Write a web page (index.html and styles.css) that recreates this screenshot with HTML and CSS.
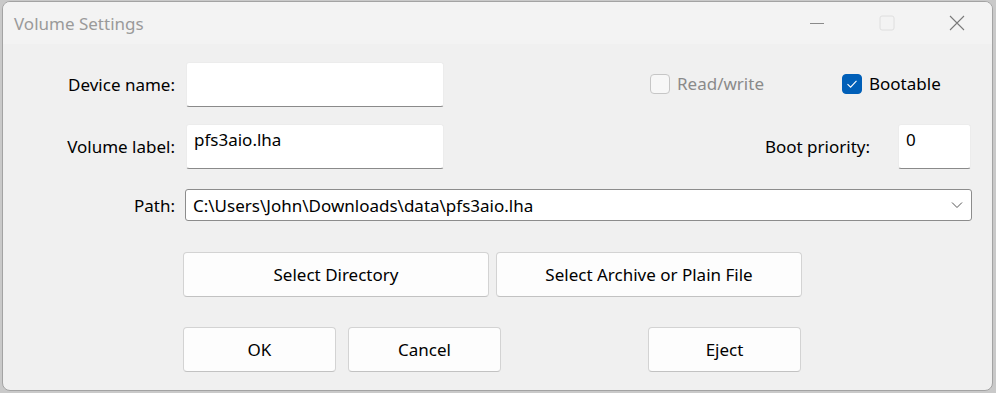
FILE: index.html
```html
<!DOCTYPE html>
<html lang="en">
<head>
    <meta charset="UTF-8">
    <title>Volume Settings</title>
    <link rel="stylesheet" href="styles.css">
</head>
<body>
    <div class="window">
        <div class="titlebar">
            <span class="title">Volume Settings</span>
            <div class="caption">
                <span class="cap-btn">
                    <svg width="16" height="16" viewBox="0 0 16 16"><path d="M1 8.5h14" stroke="#8a8a8a" stroke-width="1"/></svg>
                </span>
                <span class="cap-btn">
                    <svg width="16" height="16" viewBox="0 0 16 16"><rect x="1" y="1" width="14" height="14" rx="2" fill="none" stroke="#dedede" stroke-width="1"/></svg>
                </span>
                <span class="cap-btn">
                    <svg width="16" height="16" viewBox="0 0 16 16"><path d="M1 1L15 15M15 1L1 15" stroke="#7a7a7a" stroke-width="1.1"/></svg>
                </span>
            </div>
        </div>

        <div class="content">
            <div class="row">
                <span class="field-label">Device name:</span>
                <div class="edit edit-wide"></div>
                <label class="check check-rw disabled"><span class="box"></span>Read/write</label>
                <label class="check"><span class="box checked"><svg width="12" height="10" viewBox="0 0 12 10"><path d="M1.5 5.2L4.6 8.2L10.5 1.8" fill="none" stroke="#fff" stroke-width="1.1"/></svg></span>Bootable</label>
            </div>

            <div class="row row-volume">
                <span class="field-label">Volume label:</span>
                <div class="edit edit-wide">pfs3aio.lha</div>
                <span class="boot-label">Boot priority:</span>
                <div class="edit edit-small">0</div>
            </div>

            <div class="row row-path">
                <span class="field-label">Path:</span>
                <div class="combo">
                    <span>C:\Users\John\Downloads\data\pfs3aio.lha</span>
                    <svg width="12" height="8" viewBox="0 0 12 8"><path d="M1 1.5L6 6.5L11 1.5" fill="none" stroke="#555" stroke-width="1"/></svg>
                </div>
            </div>

            <div class="row row-select">
                <button class="btn btn-wide">Select Directory</button>
                <button class="btn btn-wide">Select Archive or Plain File</button>
            </div>

            <div class="row row-actions">
                <button class="btn">OK</button>
                <button class="btn btn-cancel">Cancel</button>
                <button class="btn btn-eject">Eject</button>
            </div>
        </div>
    </div>
</body>
</html>
```

FILE: styles.css
```css
body {
    margin: 0;
    background: #c9c9c9;
    font-family: 'Noto Sans', sans-serif;
    overflow: hidden;
}
.window {
    margin: 1px 0 0 2px;
    width: 989px;
    height: 388px;
    border: 1px solid #a3a3a3;
    border-radius: 8px;
    background: #f0f0f0;
    overflow: hidden;
}
.titlebar {
    height: 42px;
    background: #f3f3f3;
    display: flex;
    align-items: center;
}
.title {
    flex: 1;
    padding-left: 11px;
    font-size: 17px;
    color: #9a9a9a;
}
.caption {
    display: flex;
    height: 100%;
}
.cap-btn {
    width: 70px;
    display: flex;
    align-items: center;
    justify-content: center;
}
.content {
    padding-top: 18px;
}
.row {
    display: flex;
    align-items: center;
    font-size: 17px;
    color: #000;
}
.field-label {
    width: 172px;
    padding-right: 1px;
    text-align: right;
}
.edit {
    box-sizing: border-box;
    height: 45px;
    margin-left: 10px;
    padding: 5px 7px;
    background: #fff;
    border: 1px solid #ececec;
    border-bottom-color: #8a8a8a;
    border-radius: 3px;
    line-height: 20px;
    align-self: flex-start;
}
.edit-wide {
    width: 258px;
}
.check {
    display: flex;
    align-items: center;
    gap: 7px;
    align-self: flex-start;
    margin-top: 10px;
}
.check-rw {
    width: 192px;
    margin-left: 206px;
}
.disabled {
    color: #8a8a8a;
}
.box {
    box-sizing: border-box;
    width: 20px;
    height: 20px;
    border: 1px solid #c6c6c6;
    border-radius: 4px;
    background: #f7f7f7;
    display: flex;
    align-items: center;
    justify-content: center;
}
.box.checked {
    background: #005fb8;
    border-color: #005fb8;
}
.row-volume {
    margin-top: 17px;
}
.boot-label {
    width: 426px;
    text-align: right;
}
.edit-small {
    width: 73px;
    margin-left: 28px;
}
.row-path {
    margin-top: 20px;
}
.combo {
    box-sizing: border-box;
    width: 787px;
    height: 32px;
    margin-left: 9px;
    padding: 0 8px 0 7px;
    display: flex;
    align-items: center;
    justify-content: space-between;
    background: #fff;
    border: 1px solid #8c8c8c;
    border-radius: 3px;
}
.btn {
    box-sizing: border-box;
    width: 153px;
    height: 45px;
    background: #fdfdfd;
    border: 1px solid #d3d3d3;
    border-bottom-color: #c2c2c2;
    border-radius: 4px;
    font-family: 'Noto Sans', sans-serif;
    font-size: 17px;
    color: #000;
    padding: 0;
}
.btn-wide {
    width: 306px;
}
.row-select {
    margin-top: 31px;
    padding-left: 180px;
    gap: 7px;
}
.row-actions {
    margin-top: 30px;
    padding-left: 180px;
}
.btn-cancel {
    margin-left: 12px;
}
.btn-eject {
    margin-left: 147px;
}
```
